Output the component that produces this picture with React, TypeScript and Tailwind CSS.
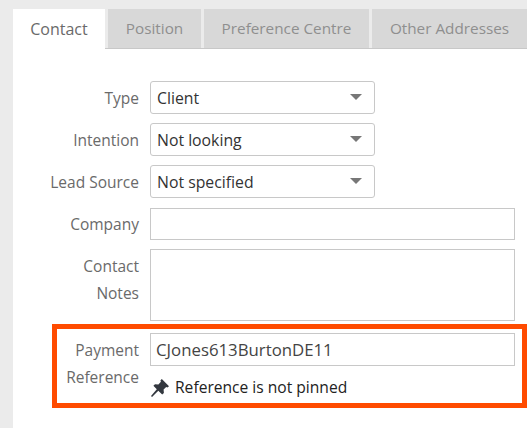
import { ReactNode } from "react";

const tabs = [
  { label: "Contact", width: "w-[92px]", active: true },
  { label: "Position", width: "w-[93px]" },
  { label: "Preference Centre", width: "w-[165px]" },
  { label: "Other Addresses", width: "w-[155px]" },
];

const SelectBox = ({ value }: { value: string }) => (
  <div className="flex h-[33px] w-[225px] items-center justify-between rounded-[3px] border border-[#c8c8c8] bg-white pl-[6px] pr-[12px] pt-[2px] text-[15.8px] text-[#333]">
    <span>{value}</span>
    <span className="mt-[-4px] h-0 w-0 border-x-[6px] border-t-[6px] border-x-transparent border-t-[#777]" />
  </div>
);

const Row = ({ label, labelClass, className, children }: { label: ReactNode; labelClass?: string; className?: string; children: ReactNode }) => (
  <div className={`flex ${className ?? ""}`}>
    <div className={`w-[126px] shrink-0 text-right leading-[27px] text-[#6a6a6a] ${labelClass ?? "pt-[4px]"}`}>{label}</div>
    <div className="ml-[11px] flex-1">{children}</div>
  </div>
);

const PinIcon = () => (
  <svg viewBox="0 0 18 18" className="h-[18px] w-[18px]" fill="#33383f">
    <path d="M10.8 0 L18 7.2 L16.4 8.6 L15.2 8.1 L12.6 10.6 L12.9 14 L11.2 15.6 L7.3 11.7 L1 18 L0 17 L5.8 10.2 L2.4 6.8 L4 5.2 L7.4 5.4 L9.9 2.8 L9.4 1.6 Z" />
  </svg>
);

export default function App() {
  return (
    <div className="h-[428px] w-[527px] overflow-hidden bg-[#ebebeb] pl-[13px] pt-[9px] font-['Open_Sans',sans-serif] text-[15.5px]">
      <div className="flex h-[40px] gap-[3px] border-b border-[#c8c8c8]">
        {tabs.map((t) => (
          <div
            key={t.label}
            className={`flex shrink-0 items-center justify-center ${t.width} ${
              t.active ? "h-[40px] bg-white text-[16px] text-[#6a6a6a]" : "h-[39px] bg-[#d8d8d8] text-[15.3px] text-[#8f8f8f]"
            }`}
          >
            {t.label}
          </div>
        ))}
      </div>
      <div className="h-[379px] bg-white pr-[12px] pt-[32px]">
        <div className="flex flex-col gap-[9px]">
          <Row label="Type"><SelectBox value="Client" /></Row>
          <Row label="Intention"><SelectBox value="Not looking" /></Row>
          <Row label="Lead Source"><SelectBox value="Not specified" /></Row>
          <Row label="Company" labelClass="pt-[3px]" className="mt-[1px]">
            <div className="h-[32px] border border-[#c8c8c8]" />
          </Row>
          <Row label={<>Contact<br />Notes</>}>
            <div className="h-[72px] border border-[#c8c8c8]" />
          </Row>
        </div>
        <div className="ml-[39px] mr-[-12px] mt-[3px] h-[84px] border-[5px] border-[#ff4b00] pr-[7px] pt-[4px]">
          <div className="flex">
            <div className="w-[82px] shrink-0 pt-[4px] text-right leading-[27px] text-[#6a6a6a]">
              Payment<br />Reference
            </div>
            <div className="ml-[11px] flex-1">
              <div className="flex h-[33px] items-center border border-[#c8c8c8] pl-[5px] text-[16.8px] text-[#444]">CJones613BurtonDE11</div>
              <div className="mt-[10px] flex items-center gap-[6px] pl-[1px] text-[15.6px] text-[#222]">
                <PinIcon />
                <span>Reference is not pinned</span>
              </div>
            </div>
          </div>
        </div>
      </div>
    </div>
  );
}
